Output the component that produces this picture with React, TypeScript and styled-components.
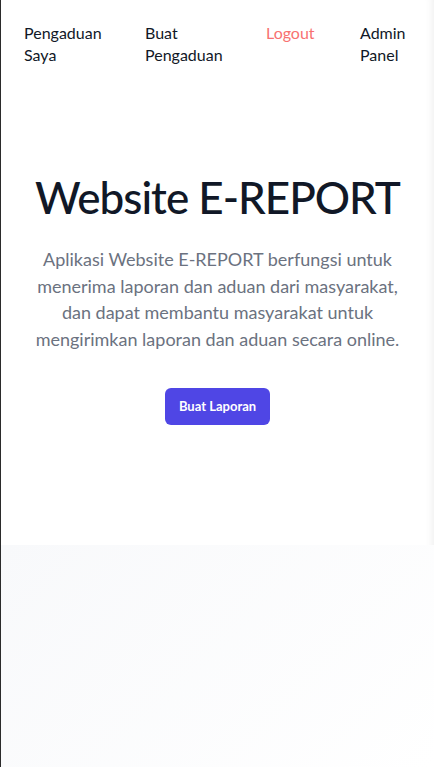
import styled, { createGlobalStyle } from "styled-components";

const GlobalStyle = createGlobalStyle`
  * {
    box-sizing: border-box;
  }
  body {
    margin: 0;
    font-family: Lato, "Noto Sans", sans-serif;
    background: #ffffff;
  }
`;

const Page = styled.div`
  min-height: 767px;
  display: flex;
  flex-direction: column;
  border-left: 1px solid #2b2b2b;
  box-shadow: inset -9px 0 9px -8px rgba(0, 0, 0, 0.08);
`;

const Nav = styled.nav`
  display: grid;
  grid-template-columns: 121px 121px 94px 1fr;
  padding: 22px 23px 0;
`;

const NavLink = styled.a<{ $danger?: boolean }>`
  font-size: 16px;
  line-height: 21.5px;
  color: ${(p) => (p.$danger ? "#f87171" : "#111827")};
  text-decoration: none;
  cursor: pointer;
`;

const Hero = styled.section`
  display: flex;
  flex-direction: column;
  align-items: center;
  text-align: center;
  padding: 108px 24px 120px;
`;

const Title = styled.h1`
  margin: 0;
  font-size: 44px;
  line-height: 48px;
  font-weight: 500;
  letter-spacing: -1px;
  white-space: nowrap;
  color: #111827;
`;

const Lead = styled.p`
  margin: 25px 0 0;
  font-size: 18px;
  line-height: 26.7px;
  color: #6b7280;
`;

const Button = styled.button`
  margin-top: 35px;
  height: 37px;
  padding: 0 14px;
  border: none;
  border-radius: 6px;
  background: #4f46e5;
  color: #ffffff;
  font-family: inherit;
  font-size: 13px;
  font-weight: 700;
  cursor: pointer;
`;

const Lower = styled.section`
  flex: 1;
  background: linear-gradient(135deg, #f8f9fb 0%, #ffffff 100%);
`;

const App = () => {
  return (
    <>
      <GlobalStyle />
      <Page>
        <Nav>
          <NavLink>
            Pengaduan
            <br />
            Saya
          </NavLink>
          <NavLink>
            Buat
            <br />
            Pengaduan
          </NavLink>
          <NavLink $danger>Logout</NavLink>
          <NavLink>
            Admin
            <br />
            Panel
          </NavLink>
        </Nav>
        <Hero>
          <Title>Website E-REPORT</Title>
          <Lead>
            Aplikasi Website E-REPORT berfungsi untuk menerima laporan dan
            aduan dari masyarakat, dan dapat membantu masyarakat untuk
            mengirimkan laporan dan aduan secara online.
          </Lead>
          <Button>Buat Laporan</Button>
        </Hero>
        <Lower />
      </Page>
    </>
  );
};

export default App;
